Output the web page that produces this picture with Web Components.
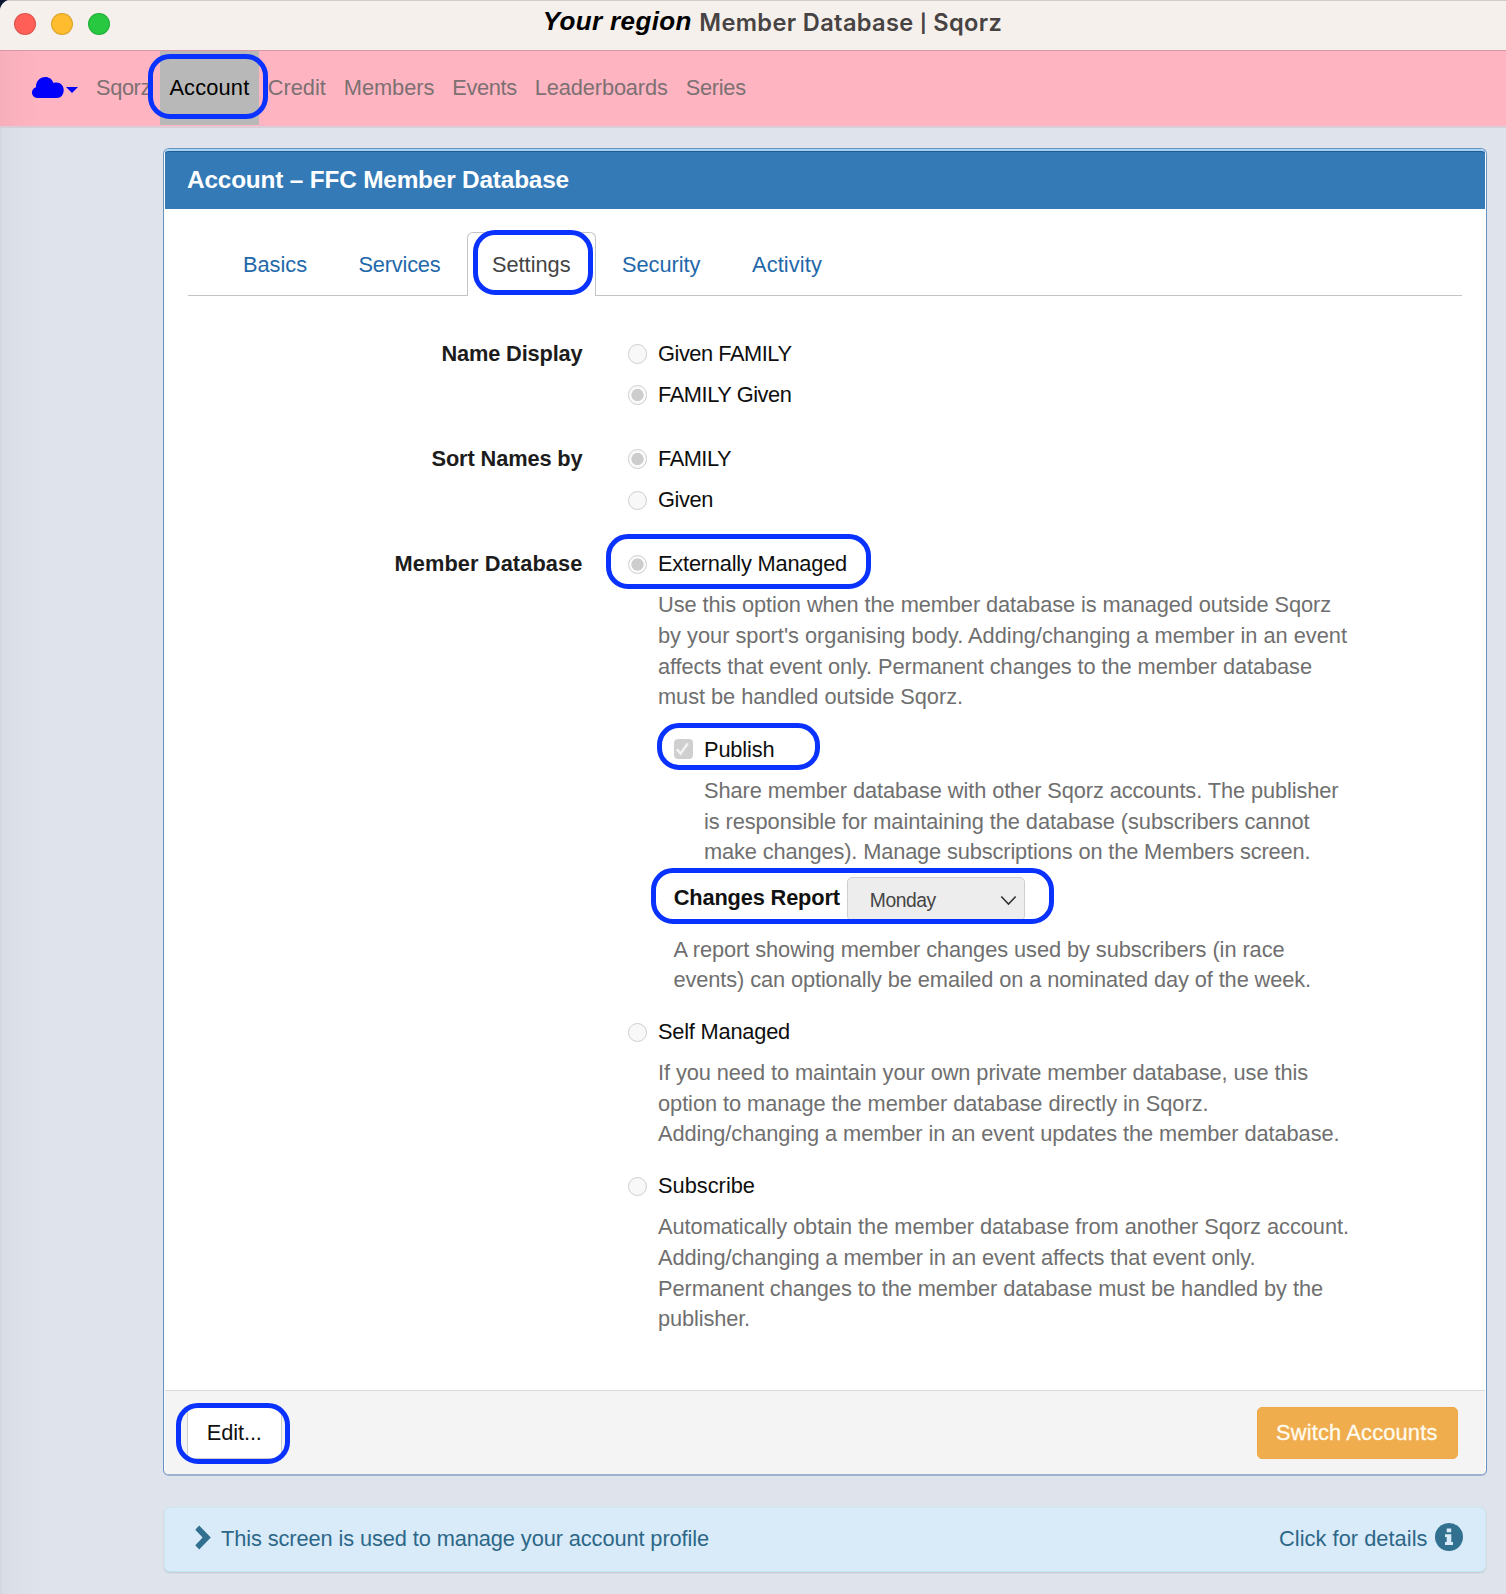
<!DOCTYPE html>
<html lang="en">
<head>
<meta charset="utf-8">
<title>Member Database | Sqorz</title>
<style>
  html, body { margin: 0; padding: 0; }
  body { width: 1506px; height: 1594px; overflow: hidden; background: #0b1730;
    font-family: "Liberation Sans", Arial, sans-serif; font-size: 21.8px; line-height: 30.6px; color: #111; }
</style>
</head>
<body>
<app-window>
  <title-bar slot="title">
    <text-line w="149" style="font:italic bold 26px/30px 'Liberation Sans',sans-serif;color:#000;margin:-5px 7.5px 0 -1px">Your region</text-line>
    <text-line w="303" style="font:600 23.6px/30px Inter,sans-serif;color:#484343">Member Database <span style="font-size:18px;font-weight:700;position:relative;top:-1px">|</span> Sqorz</text-line>
  </title-bar>
  <nav-bar slot="nav">
    <nav-item><text-line w="55">Sqorz</text-line></nav-item>
    <nav-item active><text-line w="80">Account</text-line></nav-item>
    <nav-item><text-line w="58">Credit</text-line></nav-item>
    <nav-item><text-line w="90.5">Members</text-line></nav-item>
    <nav-item><text-line w="64.5">Events</text-line></nav-item>
    <nav-item><text-line w="133">Leaderboards</text-line></nav-item>
    <nav-item><text-line w="60">Series</text-line></nav-item>
  </nav-bar>
  <account-panel>
    <text-line slot="heading" w="382">Account – FFC Member Database</text-line>
    <tab-item slot="tabs"><text-line w="64">Basics</text-line></tab-item>
    <tab-item slot="tabs"><text-line w="82">Services</text-line></tab-item>
    <tab-item slot="tabs" active><text-line w="78.5">Settings</text-line></tab-item>
    <tab-item slot="tabs"><text-line w="78.5">Security</text-line></tab-item>
    <tab-item slot="tabs"><text-line w="70">Activity</text-line></tab-item>

    <form-group>
      <text-line slot="label" w="141">Name Display</text-line>
      <choice-option><text-line w="133.5">Given FAMILY</text-line></choice-option>
      <choice-option checked><text-line w="133.5">FAMILY Given</text-line></choice-option>
    </form-group>
    <form-group>
      <text-line slot="label" w="151">Sort Names by</text-line>
      <choice-option checked><text-line w="73">FAMILY</text-line></choice-option>
      <choice-option><text-line w="55">Given</text-line></choice-option>
    </form-group>
    <form-group>
      <text-line slot="label" w="188">Member Database</text-line>
      <choice-option checked>
        <text-line w="189">Externally Managed</text-line>
        <mark-ring slot="ring" style="inset:-14.9px -23.5px -9.5px -22px"></mark-ring>
      </choice-option>
      <hint-text>
        <text-line w="673">Use this option when the member database is managed outside Sqorz</text-line>
        <text-line w="689">by your sport's organising body. Adding/changing a member in an event</text-line>
        <text-line w="654">affects that event only. Permanent changes to the member database</text-line>
        <text-line w="305">must be handled outside Sqorz.</text-line>
      </hint-text>
      <choice-option kind="check" checked style="margin:11.4px 0 0 46px">
        <text-line w="70.5">Publish</text-line>
        <mark-ring slot="ring" style="inset:-11.5px -45.5px -5px -17px"></mark-ring>
      </choice-option>
      <hint-text style="margin-left:76.5px">
        <text-line w="634.5">Share member database with other Sqorz accounts. The publisher</text-line>
        <text-line w="605.5">is responsible for maintaining the database (subscribers cannot</text-line>
        <text-line w="606.5">make changes). Manage subscriptions on the Members screen.</text-line>
      </hint-text>
      <report-row>
        <text-line slot="label" w="166">Changes Report</text-line>
        <text-line slot="value" w="66">Monday</text-line>
      </report-row>
      <hint-text style="margin:.7px 0 0 46px">
        <text-line w="611">A report showing member changes used by subscribers (in race</text-line>
        <text-line w="637.5">events) can optionally be emailed on a nominated day of the week.</text-line>
      </hint-text>
      <choice-option style="margin-top:10.7px"><text-line w="132">Self Managed</text-line></choice-option>
      <hint-text>
        <text-line w="650">If you need to maintain your own private member database, use this</text-line>
        <text-line w="550.5">option to manage the member database directly in Sqorz.</text-line>
        <text-line w="681.5">Adding/changing a member in an event updates the member database.</text-line>
      </hint-text>
      <choice-option style="margin-top:10.6px"><text-line w="97">Subscribe</text-line></choice-option>
      <hint-text>
        <text-line w="691">Automatically obtain the member database from another Sqorz account.</text-line>
        <text-line w="597.5">Adding/changing a member in an event affects that event only.</text-line>
        <text-line w="665">Permanent changes to the member database must be handled by the</text-line>
        <text-line w="92">publisher.</text-line>
      </hint-text>
    </form-group>

    <action-button slot="actions"><text-line w="55">Edit...</text-line>
      <mark-ring slot="ring" style="inset:-5px -9.5px -6px -12px"></mark-ring></action-button>
    <action-button slot="actions" kind="warning"><text-line w="161.5">Switch Accounts</text-line></action-button>
  </account-panel>
  <info-bar>
    <text-line w="488">This screen is used to manage your account profile</text-line>
    <text-line slot="more" w="148.5">Click for details</text-line>
  </info-bar>
</app-window>

<script>
function component(name, markup, extend) {
  const tpl = document.createElement('template');
  tpl.innerHTML = markup;
  customElements.define(name, class extends HTMLElement {
    constructor() {
      super();
      this.attachShadow({ mode: 'open' }).appendChild(tpl.content.cloneNode(true));
    }
    connectedCallback() { if (extend) extend(this); }
  });
}

component('mark-ring', `
<style>:host{display:block;position:absolute;box-sizing:border-box;border:5px solid #0a32ff;border-radius:22px;z-index:3;pointer-events:none}</style>`);

component('app-window', `
<style>
:host{display:flex;flex-direction:column;box-sizing:border-box;width:1506px;height:1594px;overflow:hidden;
  border-top-left-radius:11px;background:linear-gradient(90deg,#cfd3dc 0,#d9dde6 2px,#dce0e9 18px,#dfe3ec 45px)}
.page{display:flex;flex-direction:column;gap:31px;padding:20.5px 19px 0 163px}
</style>
<slot name="title"></slot><slot name="nav"></slot><div class="page"><slot></slot></div>`);

component('title-bar', `
<style>
:host{display:flex;align-items:center;box-sizing:border-box;height:51px;flex:none;padding:0 0 4px 14.3px;
  background:#f5f0ec;border-top:1px solid #d6cac6;border-bottom:1px solid #dc97a4}
.lights{display:flex;gap:14.7px;width:529.5px}
i{box-sizing:border-box;width:22px;height:22px;border-radius:50%;border:1px solid #0002}
.title{display:flex;align-items:center}
</style>
<div class="lights"><i style="background:#ff5f57"></i><i style="background:#febc2e"></i><i style="background:#28c840"></i></div>
<div class="title"><slot></slot></div>`);

component('nav-bar', `
<style>
:host{display:flex;flex:none;box-sizing:border-box;height:76.5px;padding-left:32px;color:#7c7073;
  background:linear-gradient(90deg,#00000009 0,#0000 40px),#ffb5c1;border-bottom:2.5px solid #d9ced8}
.brand{display:flex;align-items:center;gap:2px;width:55px;height:74px}
svg{display:block}
</style>
<div class="brand">
  <svg width="32" height="21" viewBox="0 0 32 21" style="margin-top:-1px"><path fill="#0000fb" d="M6 21C2.500 21 0 18.800 0 15.500C0 13 1.500 11 4 10.200C3.600 4.500 7.800 0 13.300 0C17.300 0 20.200 2.200 21.500 6C22.500 5.600 23.500 5.500 24.500 5.500C28.600 5.500 31.700 8.800 31.700 13C31.700 17.500 29 21 25 21Z"/></svg>
  <svg width="12" height="6" viewBox="0 0 12 6" style="margin-top:4px"><path fill="#0000fb" d="M0 0H12L6 6Z"/></svg>
</div>
<slot></slot>`);

component('nav-item', `
<style>
:host{display:flex;align-items:center;position:relative;box-sizing:border-box;height:74px;padding:0 9px}
:host([active]){background:#b8b8b8;color:#000;padding:0 9.400px}
mark-ring{display:none}
:host([active]) mark-ring{display:block;inset:3px -9.500px 6px -12px}
</style><slot></slot><mark-ring></mark-ring>`);

component('account-panel', `
<style>
:host{display:flex;flex-direction:column;box-sizing:border-box;width:1324px;height:1328px;background:#fff;
  border:1.500px solid #6b93c0;border-bottom:2px solid #9cb0d0;border-radius:6px;overflow:hidden}
header{box-sizing:border-box;height:60px;margin:0 1px;flex:none;padding:14px 22px 0;background:#337ab7;
  border-top:2px solid #a5d2f5;border-radius:4px 4px 0 0;box-shadow:inset 0 1px #1c5b94;color:#fff;
  font:bold 24.400px/30px "Liberation Sans",sans-serif}
.tabs{display:flex;align-items:flex-end;gap:1.500px;box-sizing:border-box;height:86.500px;flex:none;margin:0 24px;padding-left:30px;border-bottom:1.500px solid #c4c4c4}
.body{display:flex;flex-direction:column;gap:33.6px;flex:1;padding-top:43px}
footer{display:flex;justify-content:space-between;box-sizing:border-box;height:84.500px;flex:none;padding:16px 27.500px 0 22px;
  margin:0 1px;background:#f4f4f4;border-top:1px solid #d9dcdc}
</style>
<header><slot name="heading"></slot></header>
<div class="tabs"><slot name="tabs"></slot></div>
<div class="body"><slot></slot></div>
<footer><slot name="actions"></slot></footer>`);

component('tab-item', `
<style>
:host{display:block;position:relative;box-sizing:border-box;height:63px;padding:17px 24px 0;border:1px solid transparent;border-bottom:0;color:#1f68aa}
:host([active]){height:64px;margin-bottom:-1px;border-color:#c4c4c4;border-radius:6px 6px 0 0;background:#fff;color:#444}
mark-ring{display:none}
:host([active]) mark-ring{display:block;inset:-3px 2px 1px 5px}
</style><slot></slot><mark-ring></mark-ring>`);

component('form-group', `
<style>
:host{display:flex}
.label{display:flex;justify-content:flex-end;align-items:flex-start;width:418.500px;margin-right:30px;font-weight:bold;color:#1c1c1c}
.fields{display:flex;flex-direction:column;align-items:flex-start;gap:10.6px;padding-left:15px}
</style>
<div class="label"><slot name="label"></slot></div><div class="fields"><slot></slot></div>`);

component('choice-option', `
<style>
:host{display:flex;gap:11px;position:relative;height:30.6px;color:#0e0e0e}
i{box-sizing:border-box;width:19.5px;height:19.5px;margin-top:5.600px;border:1.500px solid #cfcfcf;border-radius:50%;background:#f8f8f8;display:block}
svg{display:none}
:host([checked]) i{background:radial-gradient(circle,#cdcdcd 5.800px,#fafafa 6.400px)}
:host([kind=check]) i{background:#cfcfcf;border-radius:3.500px;border-color:#cfcfcf;margin-top:4.500px}
:host([kind=check]) svg{display:block;margin:-1.500px}
</style>
<i><svg width="19.500" height="19.500" viewBox="0 0 20 20"><path d="M4 10.500L7.800 15L15.200 4.500" fill="none" stroke="#f4f4f4" stroke-width="2.500"/></svg></i><slot></slot><slot name="ring"></slot>`);

component('hint-text', `
<style>:host{display:flex;flex-direction:column;margin-left:30.5px;color:#6f6f6f}</style><slot></slot>`);

component('report-row', `
<style>
:host{display:flex;position:relative;height:45px;margin-left:46.300px}
.label{font-weight:bold;color:#111;width:173px;padding-top:4.500px}
.select{display:flex;justify-content:space-between;box-sizing:border-box;width:178px;height:44px;margin-top:-1px;padding:8px 6.500px 0 22px;
  border:1px solid #cfcfcf;border-radius:5px;background:#ededed;color:#444;font-size:19.300px}
svg{margin-top:9px}
mark-ring{inset:-10px -29px -.8px -23px}
</style>
<div class="label"><slot name="label"></slot></div>
<div class="select"><slot name="value"></slot>
<svg width="17" height="11" viewBox="0 0 17 11"><path d="M1.300 1.500L8.500 9L15.700 1.500" fill="none" stroke="#333" stroke-width="1.600"/></svg></div>
<mark-ring></mark-ring>`);

component('action-button', `
<style>
:host{display:block;position:relative;box-sizing:border-box;height:52px;padding:10.500px 18.800px 0;background:#fff;border:1px solid #ccc;border-radius:5px;color:#111}
:host([kind=warning]){padding:10.500px 18.500px 0;width:201px;background:#f0ad4e;border-color:#eea845;color:#fffbee;-webkit-text-stroke:.3px #fffbee}
</style><slot></slot><slot name="ring"></slot>`);

component('info-bar', `
<style>
:host{display:flex;box-sizing:border-box;width:1322px;height:64.500px;margin-left:.5px;padding:0 22px 0 31px;
  background:#d9ebf8;border:1px solid #cde8f0;border-bottom:1.500px solid #bce8f1;border-radius:6px;box-shadow:0 1px 2px #0002;color:#2c6788}
svg{display:block;flex:none}
.left,.right{display:flex;padding-top:15.500px}
.left{flex:1}
</style>
<div class="left"><svg width="16" height="25" viewBox="0 0 16 25" style="margin:1px 10.500px 0 -1px"><path fill="#31708f" d="M4.200 .5L15.800 12.500L4.200 24.500L.3 20.300L7.600 12.500L.3 4.700Z"/></svg><slot></slot></div>
<div class="right"><slot name="more"></slot><svg width="28" height="28" viewBox="0 0 28 28" style="margin:-1px 0 0 7px"><circle cx="14" cy="14" r="14" fill="#31708f"/><path fill="#d9ebf8" d="M11.700 5.500H16.200V9.300H11.700ZM10 11.300H16.300V19H18V22H10V19H11.700V14H10Z"/></svg></div>`);

/* A single line of text, tracked so that it takes the width given in its w attribute. */
component('text-line', `
<style>:host{display:block;white-space:nowrap;flex:none}span{display:inline}</style><span><slot></slot></span>`,
  el => {
    const span = el.shadowRoot.querySelector('span');
    const target = parseFloat(el.getAttribute('w'));
    const natural = span.getBoundingClientRect().width;
    const count = el.textContent.length;
    if (natural && target) {
      el.style.letterSpacing = ((target - natural) / count).toFixed(3) + 'px';
      el.style.width = target + 'px';
    }
  });
</script>
</body>
</html>
